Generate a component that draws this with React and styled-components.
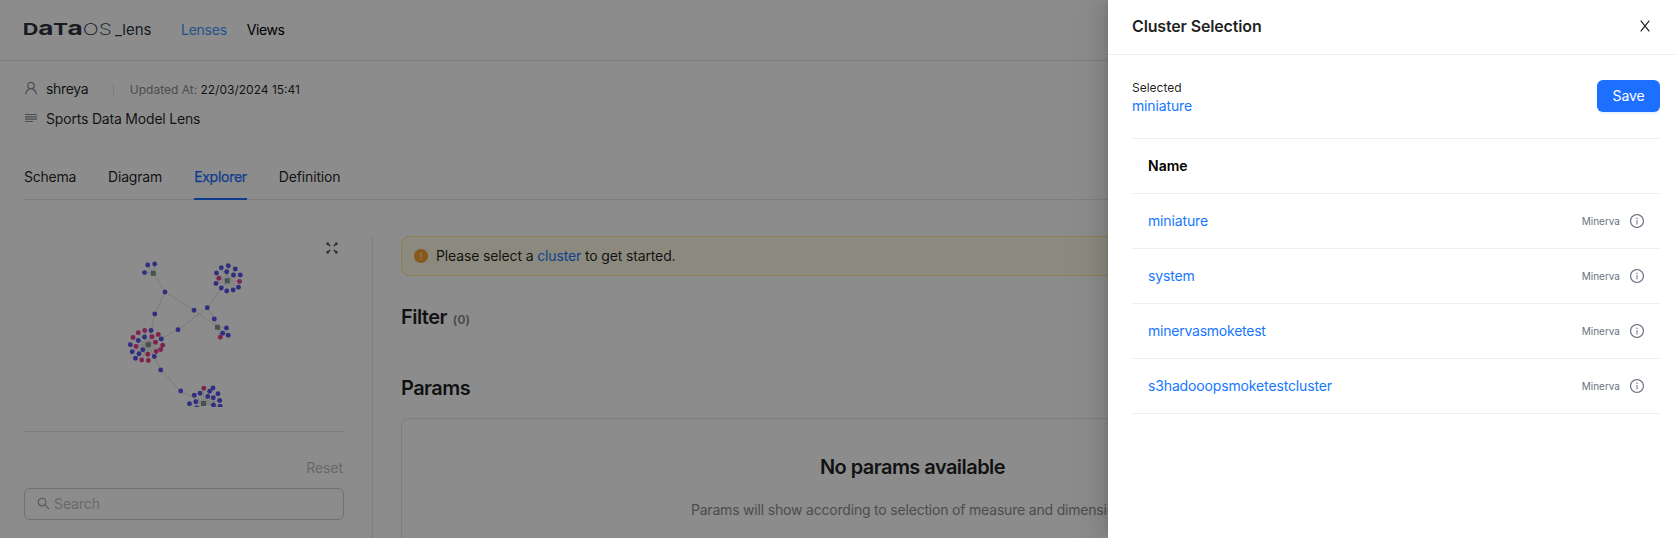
import React from 'react';
import styled, { createGlobalStyle, css } from 'styled-components';
import { AiOutlineUser, AiOutlineSearch, AiOutlineInfoCircle, AiOutlineFullscreen, AiFillExclamationCircle } from 'react-icons/ai';

const Global = createGlobalStyle`
  *, *::before, *::after { box-sizing: border-box; }
  html, body { margin: 0; overflow: hidden; }
  body { font: 400 14px/22px Inter, "Liberation Sans", sans-serif; color: rgba(0,0,0,.88); background: #fff; }
  svg { display: block; flex: none; }
`;

const Screen = styled.div`
  position: relative;
  width: 1676px;
  height: 538px;
  overflow: hidden;
`;
const Page = styled.div`
  display: flex;
  flex-direction: column;
  height: 100%;
`;
const Header = styled.header`
  display: flex;
  align-items: center;
  height: 61px;
  flex: none;
  padding: 0 24px;
  border-bottom: 1px solid #e4e4e4;
`;
const NavLink = styled.a`
  margin-left: ${p => p.$gap}px;
  color: ${p => (p.$active ? '#4096ff' : '#000')};
  letter-spacing: ${p => p.$ls || 0}px;
`;
const Meta = styled.section`
  display: flex;
  flex-direction: column;
  gap: 8px;
  padding: 17px 24px 0;
`;
const MetaRow = styled.div`
  display: flex;
  align-items: center;
  height: 22px;
  > svg { color: #8c8c8c; margin: -2px 7px 0 -1px; }
`;
const MetaText = styled.span`
  letter-spacing: ${p => p.$ls || 0}px;
`;
const Separator = styled.i`
  width: 1px;
  height: 12px;
  margin: 0 15.5px 0 25px;
  background: #e6e6e6;
`;
const Stamp = styled.span`
  padding-top: 1px;
  font-size: 12px;
  white-space: pre;
  color: ${p => (p.$muted ? '#8c8c8c' : 'rgba(0,0,0,.88)')};
`;
const Tabs = styled.nav`
  display: flex;
  gap: 32px;
  height: 46px;
  margin: 24px 24px 0;
  border-bottom: 1px solid #e8e8e8;
`;
const Tab = styled.a`
  height: 46px;
  padding-top: 12px;
  letter-spacing: ${p => p.$ls || 0}px;
  ${p => p.$active && css`
    color: #1d70ff;
    -webkit-text-stroke: .25px #1d70ff;
    border-bottom: 2px solid #1d70ff;
  `}
`;
const Body = styled.main`
  display: flex;
  flex: 1;
  padding: 36px 24px 0;
`;
const Side = styled.aside`
  width: 349px;
  padding-right: 28px;
  border-right: 1px solid #e8e8e8;
`;
const Preview = styled.div`
  display: flex;
  justify-content: space-between;
  align-items: flex-start;
  height: 196px;
  padding: 4px 4px 0 86px;
  border-bottom: 1px solid #e8e8e8;
`;
const Reset = styled.div`
  margin: 25px 0 9px;
  text-align: right;
  padding-right: 1px;
  letter-spacing: -.05px;
  color: #bdbdbd;
`;
const SearchBox = styled.div`
  display: flex;
  align-items: center;
  gap: 3px;
  height: 32px;
  padding: 0 11px;
  border: 1px solid #cfcfcf;
  border-radius: 6px;
  letter-spacing: -.1px;
  color: #bfbfbf;
  svg { color: #a0a0a0; margin-top: -2px; }
`;
const Workspace = styled.section`
  width: 1023px;
  margin-left: 28px;
`;
const Alert = styled.div`
  display: flex;
  align-items: center;
  gap: 7px;
  height: 40px;
  padding: 0 11px;
  border: 1px solid #ffe58f;
  border-radius: 8px;
  background: #fffbe6;
  letter-spacing: -.14px;
  svg { color: #faa032; }
`;
const Link = styled.a`
  color: #1677ff;
  letter-spacing: ${p => p.$ls || -.14}px;
`;
const Heading = styled.h2`
  margin: ${p => p.$top}px 0 0;
  font-size: 20px;
  font-weight: 600;
  line-height: 28px;
  letter-spacing: -.55px;
`;
const Count = styled.small`
  margin-left: 6px;
  font-size: 12px;
  font-weight: 600;
  line-height: 1;
  letter-spacing: .1px;
  color: #7f7f7f;
`;
const EmptyCard = styled.div`
  display: flex;
  flex-direction: column;
  align-items: center;
  gap: 18px;
  height: 200px;
  margin-top: 16px;
  padding-top: 34px;
  border: 1px solid #e6e6e6;
  border-radius: 8px;
`;
const EmptyTitle = styled.h3`
  margin: 0;
  font-size: 20px;
  font-weight: 600;
  line-height: 28px;
  letter-spacing: -.55px;
`;
const EmptyNote = styled.p`
  margin: 0;
  white-space: nowrap;
  letter-spacing: -.19px;
  color: #8c8c8c;
`;
const Mask = styled.div`
  position: absolute;
  inset: 0;
  background: rgba(0,0,0,.45);
`;
const Drawer = styled.aside`
  position: absolute;
  top: 0;
  right: 0;
  bottom: 0;
  width: 568px;
  background: #fff;
  box-shadow: -6px 0 16px rgba(0,0,0,.08), -3px 0 6px -4px rgba(0,0,0,.12), -9px 0 28px 8px rgba(0,0,0,.05);
`;
const DrawerHeader = styled.header`
  display: flex;
  align-items: center;
  justify-content: space-between;
  height: 55px;
  padding: 0 26px 2px 24px;
  border-bottom: 1px solid #f0f0f0;
`;
const DrawerTitle = styled.h1`
  margin: 0;
  font-size: 16px;
  font-weight: 600;
  line-height: 24px;
  letter-spacing: -.15px;
`;
const DrawerBody = styled.div`
  padding: 24px 16px 0 24px;
`;
const Selection = styled.div`
  display: flex;
  justify-content: space-between;
  align-items: flex-start;
  height: 60px;
  border-bottom: 1px solid #f0f0f0;
`;
const SelectedLabel = styled.div`
  margin-bottom: -2px;
  font-size: 12px;
  line-height: 18px;
`;
const SaveButton = styled.button`
  width: 63px;
  height: 32px;
  margin-top: 1px;
  padding: 0;
  border: 0;
  border-radius: 6px;
  background: #1d70ff;
  box-shadow: 0 2px 0 rgba(5,145,255,.1);
  color: #fff;
  font: inherit;
  letter-spacing: -.1px;
`;
const Row = styled.div`
  display: flex;
  align-items: center;
  height: 55px;
  padding: 0 15px 0 16px;
  border-bottom: 1px solid #f0f0f0;
`;
const ColumnTitle = styled.strong`
  font-weight: 600;
  color: #000;
`;
const Engine = styled.span`
  margin-left: auto;
  margin-right: 9px;
  font-size: 10px;
  color: #6b7280;
`;

const LINES = [
  [153.3, 273.3, 165, 292], [165, 292, 154.8, 314], [154.8, 314, 148, 344.7],
  [165, 292, 194, 310.3], [194, 310.3, 217.5, 327.3], [227.3, 280.8, 207.3, 307.7],
  [207.3, 307.7, 178, 329.7], [178, 329.7, 148, 344.7], [207.3, 307.7, 214.3, 319],
  [214.3, 319, 217.5, 327.3], [148, 344.7, 160.7, 370], [160.7, 370, 180.7, 391], [180.7, 391, 203.3, 403.3],
];
const HUBS = [
  { x: 153.3, y: 273.3, blue: [[144.5, 272.6], [147.7, 265], [154.7, 264]], pink: [] },
  {
    x: 227.3, y: 280.8,
    blue: [[228.3, 265.8], [221.3, 267.7], [235.3, 269], [216.5, 273], [226.7, 271.7], [233.5, 275], [240.3, 275], [216, 283.5], [221.3, 288], [226.7, 291], [233.2, 290], [238.5, 287.3]],
    pink: [[218.8, 278.3], [239.5, 281.5]],
  },
  { x: 217.5, y: 327.3, blue: [[226.5, 328], [222.7, 333.3], [228.2, 335.2]], pink: [[220.3, 337.2]] },
  {
    x: 148.3, y: 344.6,
    blue: [[151, 330.5], [161.3, 339], [144.5, 337], [138.3, 340.5], [130.3, 344.8], [132.2, 351.8], [142.8, 349.8], [139, 353.8], [135.5, 358.2], [154.3, 356.5]],
    pink: [[144.7, 330.5], [138.3, 332.8], [133, 337.5], [152, 336.7], [158.3, 334.5], [155.5, 342.2], [162.7, 345.2], [160.7, 349.5], [156.2, 351.5], [136, 346.5], [147.8, 354.3], [141.7, 360], [148.3, 360.5]],
  },
  {
    x: 203.5, y: 403.5,
    blue: [[213, 388], [209.7, 391.3], [200, 393.3], [194.3, 395.3], [207.7, 396.5], [213.3, 397.7], [218, 393.8], [219.7, 400.5], [195.8, 401.8], [189.5, 403.8], [213.5, 405], [220.2, 406.3], [196.7, 408]],
    pink: [[203.8, 388.3]],
  },
];
const LOOSE = [[165, 292], [154.8, 314], [194, 310.3], [207.3, 307.7], [214.3, 319], [178, 329.7], [160.7, 370], [180.7, 391]];

const Dot = ({ at, color }) => <circle cx={at[0]} cy={at[1]} r="2.45" fill={color} />;

function Graph() {
  return (
    <svg width="150" height="167" viewBox="110 240 150 167">
      <g stroke="#d9d9d9" strokeWidth=".8">
        {LINES.map((l, i) => <line key={i} x1={l[0]} y1={l[1]} x2={l[2]} y2={l[3]} />)}
        {HUBS.map(h => [...h.blue, ...h.pink].map((d, i) => (
          <line key={`${h.x}-${i}`} x1={h.x} y1={h.y} x2={d[0]} y2={d[1]} />
        )))}
      </g>
      {LOOSE.map((d, i) => <Dot key={i} at={d} color="#5654e8" />)}
      {HUBS.map(h => (
        <g key={h.x}>
          {h.blue.map((d, i) => <Dot key={`b${i}`} at={d} color="#5654e8" />)}
          {h.pink.map((d, i) => <Dot key={`p${i}`} at={d} color="#e8418f" />)}
          <rect x={h.x - 2.5} y={h.y - 2.5} width="5" height="5" fill="#859696" />
        </g>
      ))}
    </svg>
  );
}

function Logo() {
  return (
    <svg width="128" height="32" viewBox="0 -4 128 32" fill="#2b333b" fontFamily="Inter, sans-serif">
      <g fontWeight="700" fontSize="15.5">
        <text x="-1.2" y="17.2" textLength="15.6" lengthAdjust="spacingAndGlyphs">D</text>
        <text x="14.2" y="17.2" fontSize="20" textLength="15.2" lengthAdjust="spacingAndGlyphs">a</text>
        <text x="29" y="17.2" textLength="15" lengthAdjust="spacingAndGlyphs">T</text>
        <text x="43.6" y="17.2" fontSize="20" textLength="15.2" lengthAdjust="spacingAndGlyphs">a</text>
      </g>
      <text x="58.8" y="17.2" fontSize="15.5" fontWeight="200" textLength="29" lengthAdjust="spacingAndGlyphs">OS</text>
      <text x="91" y="17.2" fontSize="15" fontWeight="400" textLength="36.5" lengthAdjust="spacingAndGlyphs">_lens</text>
    </svg>
  );
}

const CLUSTERS = [
  { name: 'miniature' },
  { name: 'system' },
  { name: 'minervasmoketest', spacing: -.23 },
  { name: 's3hadooopsmoketestcluster' },
];

export default function App() {
  return (
    <Screen>
      <Global />
      <Page>
        <Header>
          <Logo />
          <NavLink $active $gap={29} $ls={-.25}>Lenses</NavLink>
          <NavLink $gap={20} $ls={-.4}>Views</NavLink>
        </Header>
        <Meta>
          <MetaRow>
            <AiOutlineUser size={16} />
            <MetaText $ls={-.33}>shreya</MetaText>
            <Separator />
            <Stamp $muted>Updated At: </Stamp>
            <Stamp>22/03/2024 15:41</Stamp>
          </MetaRow>
          <MetaRow>
            <svg width="16" height="14" viewBox="0 0 16 14" stroke="currentColor">
              <path d="M2 3.5h12M2 10.5h8" strokeWidth="1" />
              <path d="M2 5.9h12M2 8.1h12" strokeWidth="1.2" />
            </svg>
            <MetaText $ls={-.19}>Sports Data Model Lens</MetaText>
          </MetaRow>
        </Meta>
        <Tabs>
          <Tab $ls={-.25}>Schema</Tab>
          <Tab $ls={-.18}>Diagram</Tab>
          <Tab $active $ls={-.28}>Explorer</Tab>
          <Tab $ls={-.15}>Definition</Tab>
        </Tabs>
        <Body>
          <Side>
            <Preview>
              <Graph />
              <AiOutlineFullscreen size={16} color="#333" />
            </Preview>
            <Reset>Reset</Reset>
            <SearchBox><AiOutlineSearch size={15} />Search</SearchBox>
          </Side>
          <Workspace>
            <Alert>
              <AiFillExclamationCircle size={16} />
              <span>Please select a <Link>cluster</Link> to get started.</span>
            </Alert>
            <Heading $top={27}>Filter<Count>(0)</Count></Heading>
            <Heading $top={43}>Params</Heading>
            <EmptyCard>
              <EmptyTitle>No params available</EmptyTitle>
              <EmptyNote>Params will show according to selection of measure and dimensions.</EmptyNote>
            </EmptyCard>
          </Workspace>
        </Body>
      </Page>
      <Mask />
      <Drawer>
        <DrawerHeader>
          <DrawerTitle>Cluster Selection</DrawerTitle>
          <svg width="10" height="12" viewBox="0 0 10 12" fill="none" stroke="#222" strokeWidth="1.2">
            <path d="M.7 .6l8.6 10.8M9.3 .6L.7 11.4" />
          </svg>
        </DrawerHeader>
        <DrawerBody>
          <Selection>
            <div>
              <SelectedLabel>Selected</SelectedLabel>
              <Link>miniature</Link>
            </div>
            <SaveButton>Save</SaveButton>
          </Selection>
          <Row><ColumnTitle>Name</ColumnTitle></Row>
          {CLUSTERS.map(c => (
            <Row key={c.name}>
              <Link $ls={c.spacing}>{c.name}</Link>
              <Engine>Minerva</Engine>
              <AiOutlineInfoCircle size={16} color="#6b7280" />
            </Row>
          ))}
        </DrawerBody>
      </Drawer>
    </Screen>
  );
}
